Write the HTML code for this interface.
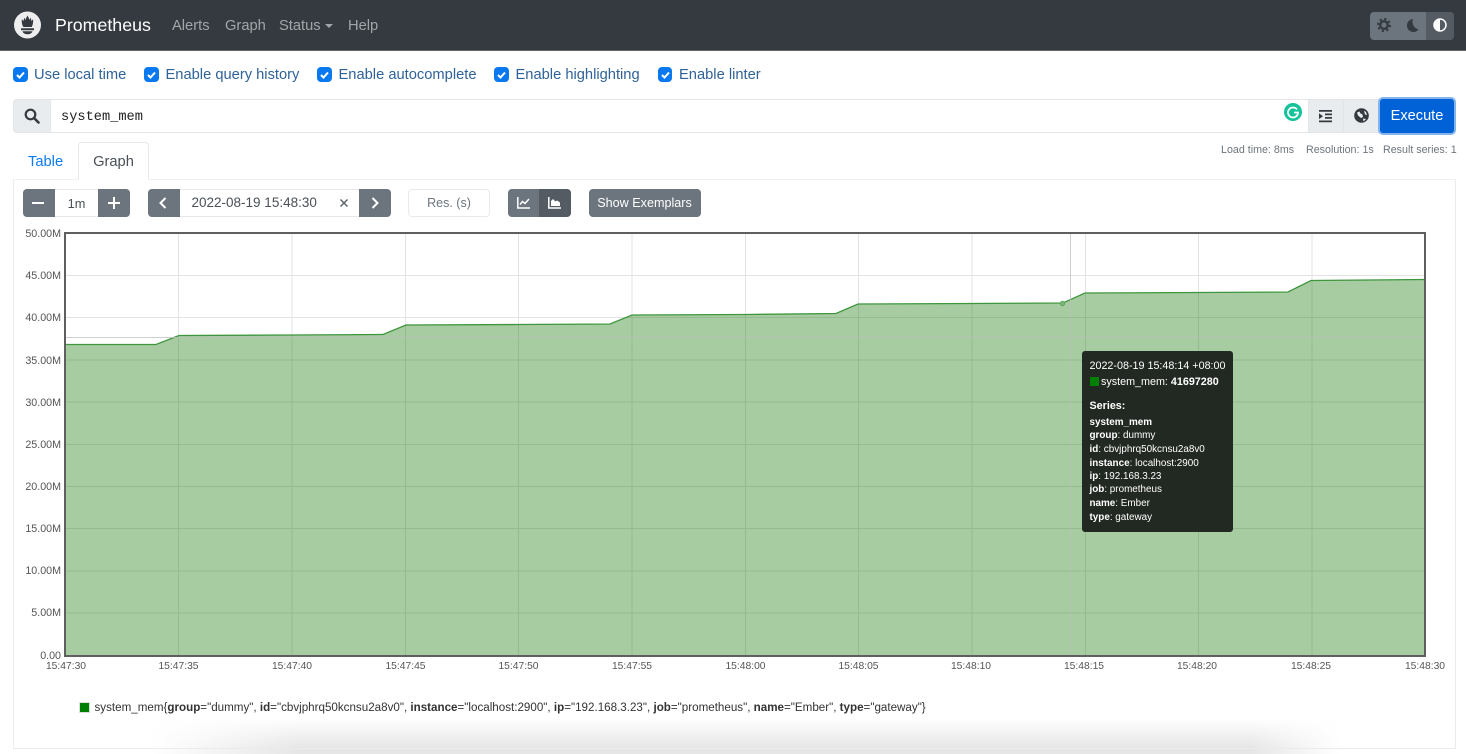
<!DOCTYPE html>
<html><head><meta charset="utf-8"><title>Prometheus</title>
<style>
*{box-sizing:border-box}
html,body{margin:0;padding:0;width:1466px;height:754px;overflow:hidden;background:#fff;font-family:"Liberation Sans",sans-serif;color:#343a40}
#w{position:relative;width:1466px;height:754px;overflow:hidden}
.a{position:absolute;white-space:nowrap}
.nav{left:0;top:0;width:1466px;height:51px;background:#343a40;border-bottom:1px solid #666}
.nl{top:16px;font-size:14.700px;line-height:20px;color:#a3a6a9}
.cb{top:67px;width:14.500px;height:14.500px;border-radius:4px;background:#0a78ee}
.cb svg{position:absolute;left:3px;top:3.500px}
.cl{top:66px;font-size:14.700px;line-height:18px;color:#2f6299}
.gb{background:#6c757d;color:#fff;height:28px}
.yl{left:0;width:61px;text-align:right;font-size:10.700px;line-height:12px;color:#555}
.xl{width:60px;text-align:center;font-size:10.300px;line-height:12px;color:#555;top:661px}
.tt{line-height:13.500px;font-size:9.900px;color:#fff}
.tp{font-size:10.760px;line-height:14px;color:#fff}
.st{top:144px;font-size:10.700px;line-height:13px;color:#6c757d}
</style></head><body><div id="w">
<div class="a nav"></div>
<svg class="a" style="left:13px;top:11px" width="28" height="28" viewBox="0 0 28 28"><circle cx="14.500" cy="14" r="13.500" fill="#eee"/><path d="M14.500 4.500c.8 1.800 1.800 2.800 1.800 4.500l1.500-2.200c.4 1.200.4 2.200.3 3.200l2-1.600c.3 2.800-.2 5.300-1.400 7.600H10.300C9 13.700 8.500 11.200 8.800 8.400l2 1.600c-.1-1 0-2 .4-3.200l1.500 2.200c0-1.700 1-2.700 1.800-4.500z" fill="#343a40"/><path d="M8 17.200h13v2H8zM9.500 20.200h10c-.5 2-2.800 3-5 3s-4.500-1-5-3z" fill="#343a40"/></svg>
<div class="a" style="left:55px;top:14px;font-size:17.800px;line-height:23px;color:#fff">Prometheus</div>
<div class="a nl" style="left:172px">Alerts</div>
<div class="a nl" style="left:225px">Graph</div>
<div class="a nl" style="left:279px">Status</div>
<div class="a" style="left:325px;top:24px;width:0;height:0;border:4.500px solid transparent;border-top-color:#a3a6a9;border-bottom:0"></div>
<div class="a nl" style="left:348px">Help</div>
<div class="a" style="left:1370px;top:12px;width:84px;height:28px;border-radius:4px;background:#6c757d;overflow:hidden"><div class="a" style="left:56px;top:0;width:28px;height:28px;background:#545b62"></div></div>
<svg class="a" style="left:1377px;top:18px" width="14" height="14" viewBox="0 0 14 14"><circle cx="7" cy="7" r="3.800" fill="none" stroke="#343a40" stroke-width="2.400"/><circle cx="7" cy="7" r="6" fill="none" stroke="#343a40" stroke-width="2" stroke-dasharray="2.200 2.510"/></svg>
<svg class="a" style="left:1405px;top:18px" width="14" height="15" viewBox="0 0 14 15"><path d="M8 1A6.500 6.500 0 1 0 13.500 11.500 8 8 0 0 1 8 1z" fill="#343a40"/></svg>
<svg class="a" style="left:1433px;top:18px" width="14" height="14" viewBox="0 0 14 14"><circle cx="7" cy="7" r="6" fill="none" stroke="#fff" stroke-width="1.500"/><path d="M7 1a6 6 0 0 0 0 12z" fill="#fff"/></svg>

<div class="a cb" style="left:13px"><svg width="9" height="8" viewBox="0 0 9 8"><path d="M1 4l2.500 2.500L8 1.500" fill="none" stroke="#fff" stroke-width="2"/></svg></div>
<div class="a cl" style="left:34px">Use local time</div>
<div class="a cb" style="left:144px"><svg width="9" height="8" viewBox="0 0 9 8"><path d="M1 4l2.500 2.500L8 1.500" fill="none" stroke="#fff" stroke-width="2"/></svg></div>
<div class="a cl" style="left:165.500px">Enable query history</div>
<div class="a cb" style="left:317px"><svg width="9" height="8" viewBox="0 0 9 8"><path d="M1 4l2.500 2.500L8 1.500" fill="none" stroke="#fff" stroke-width="2"/></svg></div>
<div class="a cl" style="left:338.500px">Enable autocomplete</div>
<div class="a cb" style="left:494px"><svg width="9" height="8" viewBox="0 0 9 8"><path d="M1 4l2.500 2.500L8 1.500" fill="none" stroke="#fff" stroke-width="2"/></svg></div>
<div class="a cl" style="left:515.500px">Enable highlighting</div>
<div class="a cb" style="left:657.500px"><svg width="9" height="8" viewBox="0 0 9 8"><path d="M1 4l2.500 2.500L8 1.500" fill="none" stroke="#fff" stroke-width="2"/></svg></div>
<div class="a cl" style="left:679px">Enable linter</div>

<div class="a" style="left:13px;top:99px;width:1370px;height:34px;border:1px solid #e4e6e9;border-radius:4px;background:#fff"></div>
<div class="a" style="left:13px;top:99px;width:38px;height:34px;background:#e9ecef;border:1px solid #e2e5e8;border-radius:4px 0 0 4px"></div>
<svg class="a" style="left:24px;top:108px" width="16" height="16" viewBox="0 0 16 16"><circle cx="6.500" cy="6.500" r="4.800" fill="none" stroke="#343a40" stroke-width="2.200"/><path d="M10 10l4.500 4.500" stroke="#343a40" stroke-width="2.600" stroke-linecap="round"/></svg>
<div class="a" style="left:61px;top:109px;font:13.670px/17px 'Liberation Mono',monospace;color:#222">system_mem</div>
<svg class="a" style="left:1284px;top:103px" width="18" height="18" viewBox="0 0 18 18"><circle cx="9" cy="9" r="9" fill="#15c39a"/><path d="M13 6.500A5 5 0 1 0 14 9.500H10" fill="none" stroke="#fff" stroke-width="1.800"/></svg>
<div class="a" style="left:1308px;top:99px;width:36px;height:34px;background:#e9ecef;border:1px solid #e2e5e8"></div>
<div class="a" style="left:1343px;top:99px;width:37px;height:34px;background:#e9ecef;border:1px solid #e2e5e8"></div>
<svg class="a" style="left:1319px;top:109px" width="13" height="14" viewBox="0 0 13 14"><path d="M0 1h13v1.800H0zM6 4.500h7v1.800H6zM6 8h7v1.800H6zM0 11.500h13v1.800H0zM0 4.300l4 2.900-4 2.900z" fill="#343a40"/></svg>
<svg class="a" style="left:1354px;top:108px" width="15" height="15" viewBox="0 0 15 15"><circle cx="7.500" cy="7.500" r="7.300" fill="#343a40"/><path d="M3 4.500l2.500-1 1 2 2 1 .5 2.500-2 1L4 7.500zM10 2.800l2 1.200 1 3-2-.5zM9 10.500l3 .5-2.500 2.500z" fill="#e9ecef"/></svg>
<div class="a" style="left:1378px;top:97px;width:78px;height:38px;border:2.500px solid #82b4ee;border-radius:5px;background:#0062d6;color:#fff;font-size:14.600px;line-height:35px;text-align:center">Execute</div>
<div class="a st" style="left:1221px">Load time: 8ms</div>
<div class="a st" style="left:1306px">Resolution: 1s</div>
<div class="a st" style="left:1383px">Result series: 1</div>

<div class="a" style="left:150px;top:718px;width:1190px;height:36px;background:linear-gradient(rgba(228,228,228,0),#e6e6e6 82%);-webkit-mask-image:linear-gradient(90deg,transparent,#000 12.600%,#000 92.500%,transparent);mask-image:linear-gradient(90deg,transparent,#000 12.600%,#000 92.500%,transparent)"></div>
<div class="a" style="left:13px;top:179px;width:1443px;height:570px;border:1px solid #e9ecef;border-top-color:#eef0f2"></div>
<div class="a" style="left:28px;top:153px;font-size:14.700px;line-height:18px;color:#0d7bf2">Table</div>
<div class="a" style="left:78px;top:142px;width:71px;height:38px;border:1px solid #e6e8eb;border-bottom:1px solid #fff;border-radius:4px 4px 0 0;background:#fff;color:#495057;font-size:14.700px;line-height:39px;text-align:center">Graph</div>

<div class="a gb" style="left:23px;top:189px;width:32px;border-radius:4px 0 0 4px"></div>
<div class="a" style="left:32px;top:202px;width:12px;height:2px;background:#fff"></div>
<div class="a" style="left:55px;top:189px;width:43px;height:28px;border-top:1px solid #e6e8eb;border-bottom:1px solid #e6e8eb;font-size:12.800px;line-height:27px;text-align:center;color:#495057">1m</div>
<div class="a gb" style="left:98px;top:189px;width:32px;border-radius:0 4px 4px 0"></div>
<div class="a" style="left:108px;top:202px;width:12px;height:2px;background:#fff"></div>
<div class="a" style="left:113px;top:197px;width:2px;height:12px;background:#fff"></div>
<div class="a gb" style="left:148px;top:189px;width:32px;border-radius:4px 0 0 4px"></div>
<svg class="a" style="left:158px;top:197px" width="10" height="12" viewBox="0 0 10 12"><path d="M7.500 1L2.500 6l5 5" fill="none" stroke="#fff" stroke-width="2"/></svg>
<div class="a" style="left:180px;top:189px;width:179px;height:28px;border-top:1px solid #e6e8eb;border-bottom:1px solid #e6e8eb"></div>
<div class="a" style="left:191.500px;top:195px;font-size:13.500px;line-height:16px;color:#495057">2022-08-19 15:48:30</div>
<svg class="a" style="left:339px;top:198px" width="10" height="10" viewBox="0 0 10 10"><path d="M1.500 1.500l7 7M8.500 1.500l-7 7" stroke="#5c6670" stroke-width="1.500"/></svg>
<div class="a gb" style="left:359px;top:189px;width:32px;border-radius:0 4px 4px 0"></div>
<svg class="a" style="left:370px;top:197px" width="10" height="12" viewBox="0 0 10 12"><path d="M2.500 1l5 5-5 5" fill="none" stroke="#fff" stroke-width="2"/></svg>
<div class="a" style="left:408px;top:189px;width:82px;height:28px;border:1px solid #e8eaed;border-radius:4px;font-size:12.500px;line-height:27px;text-align:center;color:#6c757d">Res. (s)</div>
<div class="a gb" style="left:507.500px;top:189px;width:32px;border-radius:4px 0 0 4px"></div>
<div class="a" style="left:539px;top:189px;width:32px;height:28px;background:#545b62;border-radius:0 4px 4px 0"></div>
<svg class="a" style="left:517px;top:197px" width="13" height="12" viewBox="0 0 13 12"><path d="M.8 0v11H13" fill="none" stroke="#fff" stroke-width="1.500"/><path d="M3 7.500l2.500-3 2.500 2 4-4.500" fill="none" stroke="#fff" stroke-width="1.500"/></svg>
<svg class="a" style="left:548px;top:197px" width="13" height="12" viewBox="0 0 13 12"><path d="M.8 0v11H13" fill="none" stroke="#fff" stroke-width="1.500"/><path d="M3 9V4l2-2 2.500 2.500L9 3.500l3 2V9z" fill="#fff"/></svg>
<div class="a gb" style="left:588.500px;top:189px;width:112px;border-radius:4px;font-size:12.600px;line-height:28px;text-align:center">Show Exemplars</div>

<svg class="a" style="left:0;top:0" width="1466" height="754" viewBox="0 0 1466 754">
<g stroke="#e3e3e3" stroke-width="1">
<path d="M65 275.500H1425M65 317.500H1425M65 360H1425M65 402H1425M65 444.500H1425M65 486.500H1425M65 528.500H1425M65 571H1425M65 613H1425"/>
<path d="M178.500 233V656M292 233V656M405.500 233V656M518.500 233V656M632 233V656M745.500 233V656M858.500 233V656M972 233V656M1085.500 233V656M1198.500 233V656M1312 233V656"/>
</g>
<path d="M65 344.500H156L179 335.500L292 335L383 334.500L406 325L519 324.500L610 324L632 315L745 314.500L836 313.500L858 304L972 303.500L1063 303L1085 293L1198 292.500L1288 292L1311 280.500L1425 279.500V656H65Z" fill="rgb(20,117,0)" fill-opacity=".37"/>
<path d="M65 344.500H156L179 335.500L292 335L383 334.500L406 325L519 324.500L610 324L632 315L745 314.500L836 313.500L858 304L972 303.500L1063 303L1085 293L1198 292.500L1288 292L1311 280.500L1425 279.500" fill="none" stroke="#3d963d" stroke-width="1.300"/>
<path d="M1070.500 233V656M65 337.500H1425" stroke="#bdbdbd" stroke-opacity=".75" fill="none"/>
<circle cx="1062.500" cy="303.500" r="2.200" fill="#7ab77a" stroke="#5da55d"/>
<path d="M65 233H1425V656H65Z" fill="none" stroke="#5f5f5f" stroke-width="2"/>
</svg>

<div class="a yl" style="top:228px">50.00M</div>
<div class="a yl" style="top:270px">45.00M</div>
<div class="a yl" style="top:312px">40.00M</div>
<div class="a yl" style="top:355px">35.00M</div>
<div class="a yl" style="top:397px">30.00M</div>
<div class="a yl" style="top:439px">25.00M</div>
<div class="a yl" style="top:481px">20.00M</div>
<div class="a yl" style="top:523px">15.00M</div>
<div class="a yl" style="top:565px">10.00M</div>
<div class="a yl" style="top:607px">5.00M</div>
<div class="a yl" style="top:650px">0.00</div>
<div class="a xl" style="left:36px">15:47:30</div>
<div class="a xl" style="left:148.500px">15:47:35</div>
<div class="a xl" style="left:262px">15:47:40</div>
<div class="a xl" style="left:375.500px">15:47:45</div>
<div class="a xl" style="left:488.500px">15:47:50</div>
<div class="a xl" style="left:602px">15:47:55</div>
<div class="a xl" style="left:715.500px">15:48:00</div>
<div class="a xl" style="left:828.500px">15:48:05</div>
<div class="a xl" style="left:941px">15:48:10</div>
<div class="a xl" style="left:1054px">15:48:15</div>
<div class="a xl" style="left:1167px">15:48:20</div>
<div class="a xl" style="left:1281px">15:48:25</div>
<div class="a xl" style="left:1395px">15:48:30</div>

<div class="a" style="left:1082px;top:351px;width:151px;height:181px;background:#222822;border-radius:3px;color:#fff"></div>
<div class="a tp" style="left:1089.500px;top:359px">2022-08-19 15:48:14 +08:00</div>
<div class="a" style="left:1090px;top:377px;width:9px;height:9px;background:#008000"></div>
<div class="a tp" style="left:1101px;top:375px">system_mem: <b>41697280</b></div>
<div class="a tp" style="left:1089.500px;top:399px"><b>Series:</b></div>
<div class="a tt" style="left:1089.500px;top:415.500px"><b>system_mem</b></div>
<div class="a tt" style="left:1089.500px;top:429px"><b>group</b>: dummy</div>
<div class="a tt" style="left:1089.500px;top:443px"><b>id</b>: cbvjphrq50kcnsu2a8v0</div>
<div class="a tt" style="left:1089.500px;top:456.500px"><b>instance</b>: localhost:2900</div>
<div class="a tt" style="left:1089.500px;top:470px"><b>ip</b>: 192.168.3.23</div>
<div class="a tt" style="left:1089.500px;top:483px"><b>job</b>: prometheus</div>
<div class="a tt" style="left:1089.500px;top:497px"><b>name</b>: Ember</div>
<div class="a tt" style="left:1089.500px;top:510.500px"><b>type</b>: gateway</div>

<div class="a" style="left:80px;top:703px;width:9px;height:9px;background:#008000;outline:1px solid #ddd"></div>
<div class="a" style="left:94.500px;top:701px;font-size:11.620px;line-height:14px;color:#333">system_mem{<b>group</b>="dummy", <b>id</b>="cbvjphrq50kcnsu2a8v0", <b>instance</b>="localhost:2900", <b>ip</b>="192.168.3.23", <b>job</b>="prometheus", <b>name</b>="Ember", <b>type</b>="gateway"}</div>
</div></body></html>
